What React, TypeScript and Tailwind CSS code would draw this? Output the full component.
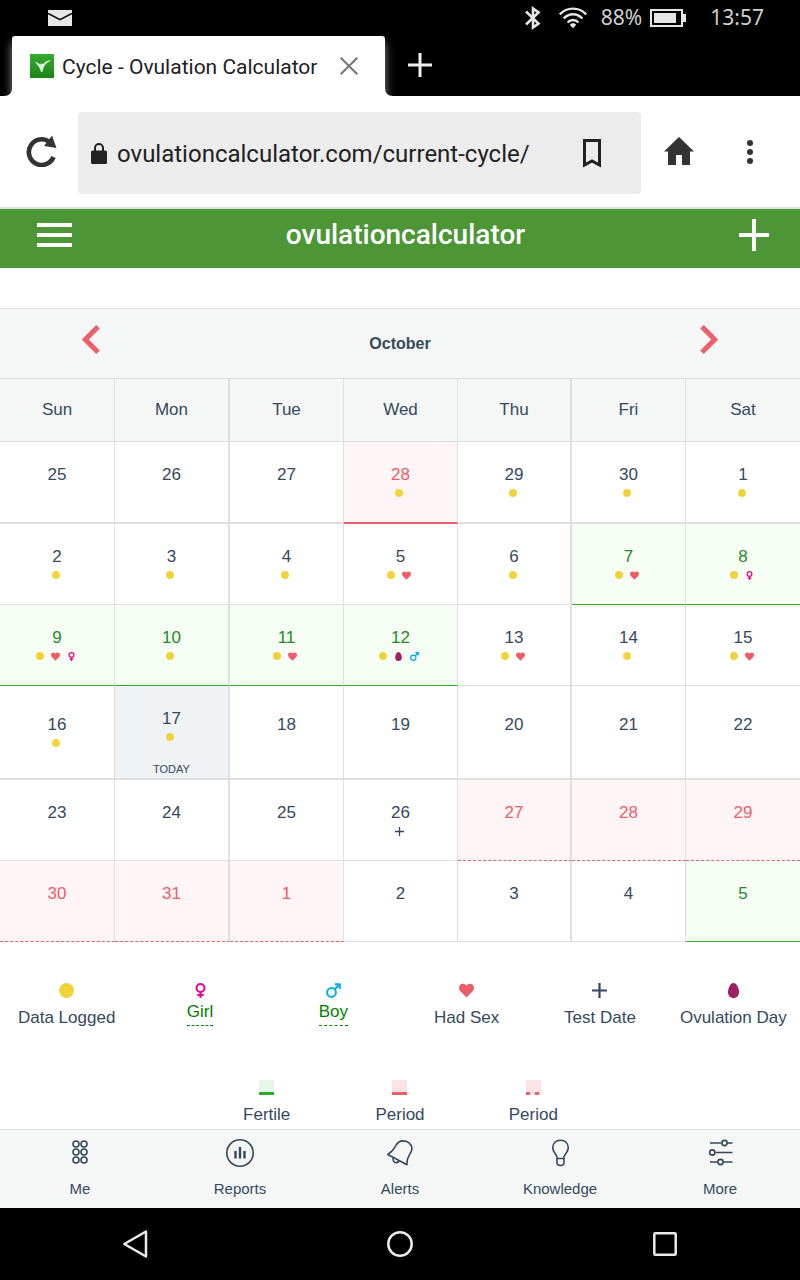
import type { ReactNode } from "react"
import clsx from "clsx"

type MarkerName = "logged" | "sex" | "girl" | "boy" | "egg" | "test"
type DayKind = "fertile" | "period" | "predicted" | "today"

type Day = {
  n: number
  marks?: MarkerName[]
  kind?: DayKind
}

const weekdays = ["Sun", "Mon", "Tue", "Wed", "Thu", "Fri", "Sat"]

const weeks: Day[][] = [
  [
    { n: 25 },
    { n: 26 },
    { n: 27 },
    { n: 28, marks: ["logged"], kind: "period" },
    { n: 29, marks: ["logged"] },
    { n: 30, marks: ["logged"] },
    { n: 1, marks: ["logged"] },
  ],
  [
    { n: 2, marks: ["logged"] },
    { n: 3, marks: ["logged"] },
    { n: 4, marks: ["logged"] },
    { n: 5, marks: ["logged", "sex"] },
    { n: 6, marks: ["logged"] },
    { n: 7, marks: ["logged", "sex"], kind: "fertile" },
    { n: 8, marks: ["logged", "girl"], kind: "fertile" },
  ],
  [
    { n: 9, marks: ["logged", "sex", "girl"], kind: "fertile" },
    { n: 10, marks: ["logged"], kind: "fertile" },
    { n: 11, marks: ["logged", "sex"], kind: "fertile" },
    { n: 12, marks: ["logged", "egg", "boy"], kind: "fertile" },
    { n: 13, marks: ["logged", "sex"] },
    { n: 14, marks: ["logged"] },
    { n: 15, marks: ["logged", "sex"] },
  ],
  [
    { n: 16, marks: ["logged"] },
    { n: 17, marks: ["logged"], kind: "today" },
    { n: 18 },
    { n: 19 },
    { n: 20 },
    { n: 21 },
    { n: 22 },
  ],
  [
    { n: 23 },
    { n: 24 },
    { n: 25 },
    { n: 26, marks: ["test"] },
    { n: 27, kind: "predicted" },
    { n: 28, kind: "predicted" },
    { n: 29, kind: "predicted" },
  ],
  [
    { n: 30, kind: "predicted" },
    { n: 31, kind: "predicted" },
    { n: 1, kind: "predicted" },
    { n: 2 },
    { n: 3 },
    { n: 4 },
    { n: 5, kind: "fertile" },
  ],
]

function Marker({ name, className }: { name: MarkerName; className: string }) {
  return (
    <svg viewBox="0 0 15 15" className={className} fill="none" aria-hidden="true">
      {name === "logged" && <circle cx="7.5" cy="7.5" r="7.4" fill="#efd338" />}
      {name === "sex" && (
        <path
          d="M7.5 14.6 1.3 8.2C-.4 6.3-.4 3.4 1.3 1.8 3.2.1 6 .4 7.500 2.700 9 .4 11.800.1 13.700 1.800c1.700 1.600 1.700 4.500 0 6.400Z"
          fill="#ee5d6a"
        />
      )}
      {name === "girl" && (
        <g stroke="#ec008c" strokeWidth="2">
          <circle cx="7.5" cy="5" r="4" />
          <path d="M7.5 9v6M4.300 12h6.400" />
        </g>
      )}
      {name === "boy" && (
        <g stroke="#00aeef" strokeWidth="2">
          <circle cx="5.5" cy="9.5" r="4.4" />
          <path d="m8.7 6.3 5-5M9 1.200h4.800V6" />
        </g>
      )}
      {name === "egg" && (
        <path d="M7.5 0C10.500 0 13 5 13 9c0 3.700-2.300 6-5.500 6S2 12.700 2 9c0-4 2.500-9 5.500-9Z" fill="#9e1f63" />
      )}
      {name === "test" && <path d="M7.5 0v15M0 7.500h15" stroke="#34495e" strokeWidth="2.2" />}
    </svg>
  )
}

function StatusBar() {
  return (
    <div className="flex h-9 items-center bg-black pr-9 pl-12 font-['Noto_Sans',sans-serif] text-[21px] text-[#cfcfcf]">
      <svg viewBox="0 0 24 16" className="h-4 w-6">
        <path d="M0 0h24v16H0Z" fill="#e6e6e6" />
        <path d="m0 3.500 12 6.200 12-6.200" fill="none" stroke="#000" strokeWidth="1.5" />
      </svg>
      <svg viewBox="0 0 16 24" className="mr-[18px] ml-auto h-6 w-4" fill="none" stroke="#e6e6e6" strokeWidth="2.6">
        <path d="m1 5.500 12.500 12L8 21.500v-19l5.500 4L1 18.500" />
      </svg>
      <svg viewBox="0 0 28 22" className="mr-3.5 h-[22px] w-7" fill="none" stroke="#e6e6e6" strokeWidth="2.4">
        <path d="M.8 7.500C8-.3 20-.3 27.200 7.500M4.700 11.500c5.200-5.700 13.400-5.700 18.600 0M8.600 15.500c3-3.400 7.800-3.400 10.800 0" />
        <path d="M11 18c0-2.500 6-2.500 6 0l-3 3.200Z" fill="#e6e6e6" stroke="none" />
      </svg>
      <span>88%</span>
      <svg viewBox="0 0 36 18" className="mr-6 ml-2 h-[18px] w-9">
        <path d="M1 1h31v16H1Z" fill="none" stroke="#e6e6e6" strokeWidth="2" />
        <path d="M4 4h22v10H4ZM33 5h3v8h-3Z" fill="#e6e6e6" />
      </svg>
      <span>13:57</span>
    </div>
  )
}

function TabBar() {
  return (
    <div className="flex h-15 overflow-hidden bg-black pl-3 font-[Roboto,sans-serif]">
      <div className="relative flex w-[373px] items-center rounded-t-[3px] bg-white pl-[18px] shadow-[0_6px_10px_rgba(255,255,255,0.55)]">
        <svg viewBox="0 0 8 8" className="absolute bottom-0 -left-2 size-2" fill="#fff">
          <path d="M8 0v8H0c5 0 8-3 8-8Z" />
        </svg>
        <svg viewBox="0 0 24 24" className="size-6">
          <defs>
            <linearGradient id="favicon" x1="0" y1="0" x2="0" y2="1">
              <stop offset="0" stopColor="#36ab32" />
              <stop offset="1" stopColor="#1c8418" />
            </linearGradient>
          </defs>
          <path d="M0 0h24v24H0Z" fill="url(#favicon)" />
          <path
            d="M5 8c2 0 3.500 1 5 2.500l1.500-1.200 1.300 1C15 7.500 18 6.300 21 6c-1.500 2-4 2.300-5.500 4.200-1.500 1.800-2 4-3 7.300-1 .8-1.700.5-1.900-.8C9.800 13 7.500 11.500 5 8Z"
            fill="#d9f5d3"
          />
        </svg>
        <span className="ml-2 pt-1 text-[21px] text-[#212121]">Cycle - Ovulation Calculator</span>
        <button aria-label="Close tab" className="mr-[27px] ml-auto">
          <svg viewBox="0 0 18 18" className="size-[18px]" stroke="#757575" strokeWidth="2">
            <path d="m.7.7 16.600 16.600M17.300.7.7 17.300" />
          </svg>
        </button>
        <svg viewBox="0 0 8 8" className="absolute -right-2 bottom-0 size-2" fill="#fff">
          <path d="M0 0v8h8C3 8 0 5 0 0Z" />
        </svg>
      </div>
      <button aria-label="New tab" className="ml-[23px] pb-0.5">
        <svg viewBox="0 0 24 24" className="size-6" stroke="#f0f0f0" strokeWidth="3">
          <path d="M12 0v24M0 12h24" />
        </svg>
      </button>
    </div>
  )
}

function Toolbar() {
  return (
    <div className="flex border-b-2 border-[#e0e0e0] bg-white pt-4 pr-4 pb-[13px]">
      <button aria-label="Reload" className="flex w-[78px] items-center pb-1 pl-[26px]">
        <svg viewBox="0 0 32 32" className="size-8">
          <path d="M27.500 22A12.800 12.800 0 1 1 23.500 7" fill="none" stroke="#333" strokeWidth="4.6" />
          <path d="m26 .5 4.500 12.500L18 11Z" fill="#333" />
        </svg>
      </button>
      <div className="flex h-[82px] min-w-0 flex-1 items-center gap-2.5 rounded bg-[#ececec] pr-10 pl-[13px]">
        <svg viewBox="0 0 16 21" className="h-[21px] w-4 shrink-0">
          <rect y="7.5" width="16" height="13.5" rx="1.5" fill="#212121" />
          <path d="M4 8.500V5a4 4 0 0 1 8 0v3.500" fill="none" stroke="#212121" strokeWidth="2" />
        </svg>
        <input
          aria-label="Address"
          defaultValue="ovulationcalculator.com/current-cycle/"
          className="min-w-0 flex-1 bg-transparent pt-0.5 font-[Roboto,sans-serif] text-2xl text-[#212121] outline-none"
        />
        <button aria-label="Bookmark">
          <svg viewBox="0 0 18 29" className="h-[29px] w-[18px]">
            <path d="M1.500 1.500h15V26L9 22l-7.500 4Z" fill="none" stroke="#212121" strokeWidth="3" />
          </svg>
        </button>
      </div>
      <button aria-label="Home" className="flex w-[75px] items-center justify-center pb-1">
        <svg viewBox="0 0 30 28" className="h-7 w-[30px]" fill="#333">
          <path d="M15 0 30 14.500h-4V28h-8V18h-6v10H4V14.500H0Z" />
        </svg>
      </button>
      <button aria-label="Menu" className="flex w-[68px] items-center justify-center">
        <svg viewBox="0 0 6 26" className="h-[26px] w-1.5" fill="#333">
          <circle cx="3" cy="3" r="3" />
          <circle cx="3" cy="12" r="3" />
          <circle cx="3" cy="21" r="3" />
        </svg>
      </button>
    </div>
  )
}

function SiteHeader() {
  return (
    <header className="flex h-[59px] items-center justify-between bg-[#4c9636] pr-[31px] pb-2 pl-[37px] text-white">
      <button aria-label="Open menu">
        <svg viewBox="0 0 35 24" className="h-6 w-[35px]" fill="currentColor">
          <path d="M0 0h35v4H0ZM0 10h35v4H0ZM0 20h35v4H0Z" />
        </svg>
      </button>
      <a href="#" className="font-[Roboto,sans-serif] text-[28px] leading-8 font-medium">
        ovulationcalculator
      </a>
      <button aria-label="Add">
        <svg viewBox="0 0 30 32" className="h-8 w-[30px]" stroke="currentColor" strokeWidth="4">
          <path d="M15 0v32M0 16h30" />
        </svg>
      </button>
    </header>
  )
}

function DayCell({ day }: { day: Day }) {
  const { n, marks = [], kind } = day
  return (
    <td
      className={clsx(
        "border-[#dfdfdf]",
        kind === "today" ? "bg-[#f0f3f5] px-0 pt-[21px] pb-px align-top" : "px-0 pt-0 pb-0.5 align-middle",
        kind === "fertile" && "border-b-[#2dab2d] bg-[#f6fdf5] text-[#1f8a24]",
        kind === "period" && "border-b-[#ee5d6a] bg-[#fff5f6] text-[#ee5d6a]",
        kind === "predicted" && "border-b-[#ee5d6a] bg-[#fff5f6] text-[#ee5d6a] [border-bottom-style:dashed]!"
      )}
    >
      <div className="leading-6">{n}</div>
      <div className="flex h-3 items-center justify-center gap-[7px] pr-[3px]">
        {marks.map((m) => (
          <Marker key={m} name={m} className={m === "logged" ? "size-2" : "size-[9px]"} />
        ))}
      </div>
      {kind === "today" && <div className="mt-[18px] text-[11px] leading-4">TODAY</div>}
    </td>
  )
}

function Calendar() {
  return (
    <section className="mt-10 border-t border-[#dfdfdf]">
      <div className="flex h-[70px] items-center justify-between border-b border-[#dfdfdf] bg-[#f5f7f7] px-[82px]">
        <button aria-label="Previous month" className="pb-2">
          <svg viewBox="0 0 18 29" className="h-[29px] w-[18px]" fill="none" stroke="#ee5d6a" strokeWidth="5">
            <path d="M16 1.800 3.300 14.500 16 27.200" />
          </svg>
        </button>
        <h1 className="text-base font-bold">October</h1>
        <button aria-label="Next month" className="pb-2">
          <svg viewBox="0 0 18 29" className="h-[29px] w-[18px]" fill="none" stroke="#ee5d6a" strokeWidth="5">
            <path d="M2 1.800 14.700 14.500 2 27.200" />
          </svg>
        </button>
      </div>

      <table className="w-full table-fixed border-separate border-spacing-0 text-center text-[17px] [&_td]:border-r [&_td]:border-b [&_td:last-child]:border-r-0 [&_td:nth-child(3n+2)]:border-r-2 [&_th]:border-r [&_th]:border-b [&_th:last-child]:border-r-0 [&_th:nth-child(3n+2)]:border-r-2">
        <colgroup>
          <col className="w-[115px]" />
          <col className="w-[115px]" />
          <col span={5} />
        </colgroup>
        <thead>
          <tr className="h-[63px] bg-[#f5f7f7]">
            {weekdays.map((d) => (
              <th key={d} scope="col" className="border-[#dfdfdf] p-0 font-normal">
                {d}
              </th>
            ))}
          </tr>
        </thead>
        <tbody className="[&_tr:nth-child(3n+1)_td]:border-b-2">
          {weeks.map((week, i) => (
            <tr key={i} className={i === 0 ? "h-[82px]" : "h-[81px]"}>
              {week.map((day) => (
                <DayCell key={day.n} day={day} />
              ))}
            </tr>
          ))}
        </tbody>
      </table>
    </section>
  )
}

function LegendItem({ icon, label, link }: { icon: ReactNode; label: string; link?: boolean }) {
  return (
    <li className="flex w-1/6 flex-col items-center">
      {icon}
      {link ? (
        <a href="#" className="mt-0.5 border-b border-dashed border-[#008000] pb-px leading-6 text-[#008000]">
          {label}
        </a>
      ) : (
        <span className="mt-2 leading-6 whitespace-nowrap">{label}</span>
      )}
    </li>
  )
}

function Legend() {
  const icon = "size-[15px]"
  return (
    <ul className="flex flex-wrap justify-center gap-y-[50px] pt-[41px] pb-0.5 text-[17px]">
      <LegendItem icon={<Marker name="logged" className={icon} />} label="Data Logged" />
      <LegendItem icon={<Marker name="girl" className={icon} />} label="Girl" link />
      <LegendItem icon={<Marker name="boy" className={icon} />} label="Boy" link />
      <LegendItem icon={<Marker name="sex" className={icon} />} label="Had Sex" />
      <LegendItem icon={<Marker name="test" className={icon} />} label="Test Date" />
      <LegendItem icon={<Marker name="egg" className={icon} />} label="Ovulation Day" />
      <LegendItem icon={<i className="size-[15px] border-b-3 border-[#2dab2d] bg-[#e8f6e8]" />} label="Fertile" />
      <LegendItem icon={<i className="size-[15px] border-b-3 border-[#ee5d6a] bg-[#fbe3e5]" />} label="Period" />
      <LegendItem
        icon={
          <svg viewBox="0 0 15 15" className={icon}>
            <path d="M0 0h15v15H0Z" fill="#fbe3e5" />
            <path d="M0 12h4v3H0ZM9 12h4v3H9Z" fill="#ee5d6a" />
          </svg>
        }
        label="Period"
      />
    </ul>
  )
}

const navItems: { label: string; icon: ReactNode }[] = [
  {
    label: "Me",
    icon: (
      <>
        {[5, 13, 21].map((y) => (
          <g key={y}>
            <circle cx="10" cy={y} r="3" />
            <circle cx="18" cy={y} r="3" />
          </g>
        ))}
      </>
    ),
  },
  {
    label: "Reports",
    icon: (
      <>
        <circle cx="14" cy="14" r="13.2" />
        <path d="M9.500 12v7.500M14 8v11.500M18.500 12v7.500" strokeWidth="2.4" />
      </>
    ),
  },
  {
    label: "Alerts",
    icon: (
      <>
        <path d="M1.800 15.500C6 13 7.500 11 9.500 7 11.500 3 15.500 1 20 2.300c4.800 1.400 7 6 5.300 10.200-1.600 4-5 6-4.300 13.200Z" />
        <path d="M7.200 18.500c-1 5.300 3.800 6.800 6.300 3" />
      </>
    ),
  },
  {
    label: "Knowledge",
    icon: (
      <>
        <path d="M11.500 20c0-4.500-4.800-6-4.800-11.200 0-4.600 3.300-7.600 7.800-7.600s7.800 3 7.800 7.600c0 5.200-4.800 6.700-4.800 11.200" />
        <path d="M11 19.500h7v4c0 4-7 4-7 0Z" />
      </>
    ),
  },
  {
    label: "More",
    icon: (
      <>
        <path d="M4 4h11.500M21 4h5.500M9.500 13.500h17M4 23h7.500M17.500 23h9" />
        <circle cx="18.5" cy="4" r="2.6" />
        <circle cx="6.3" cy="13.5" r="2.6" />
        <circle cx="14.5" cy="23" r="2.6" />
      </>
    ),
  },
]

function BottomNav() {
  return (
    <nav className="mt-auto grid grid-cols-5 border-t border-[#dfdfdf] bg-[#f5f7f7] pt-[9px] pb-[9px] text-[15px]">
      {navItems.map((item) => (
        <a key={item.label} href="#" className="flex flex-col items-center gap-3 leading-5">
          <svg viewBox="0 0 28 28" className="size-7" fill="none" stroke="#34495e" strokeWidth="1.6" strokeLinejoin="round">
            {item.icon}
          </svg>
          {item.label}
        </a>
      ))}
    </nav>
  )
}

function SystemNav() {
  return (
    <div className="grid h-18 grid-cols-3 place-items-center bg-black px-0.5">
      <button aria-label="Back">
        <svg viewBox="0 0 28 28" className="size-7" fill="none" stroke="#ebebeb" strokeWidth="2.5" strokeLinejoin="round">
          <path d="M25 1.500v25L3.300 14Z" />
        </svg>
      </button>
      <button aria-label="Home screen">
        <svg viewBox="0 0 28 28" className="size-7" fill="none" stroke="#ebebeb" strokeWidth="2.5">
          <circle cx="14" cy="14" r="11.7" />
        </svg>
      </button>
      <button aria-label="Recent apps">
        <svg viewBox="0 0 28 28" className="size-7" fill="none" stroke="#ebebeb" strokeWidth="2.5">
          <rect x="3.3" y="3.3" width="21.4" height="21.4" rx="1" />
        </svg>
      </button>
    </div>
  )
}

export default function App() {
  return (
    <div className="flex min-h-screen flex-col bg-white font-['Liberation_Sans',Arial,sans-serif] text-[#34495e]">
      <StatusBar />
      <TabBar />
      <Toolbar />
      <SiteHeader />
      <main>
        <Calendar />
        <Legend />
      </main>
      <BottomNav />
      <SystemNav />
    </div>
  )
}
